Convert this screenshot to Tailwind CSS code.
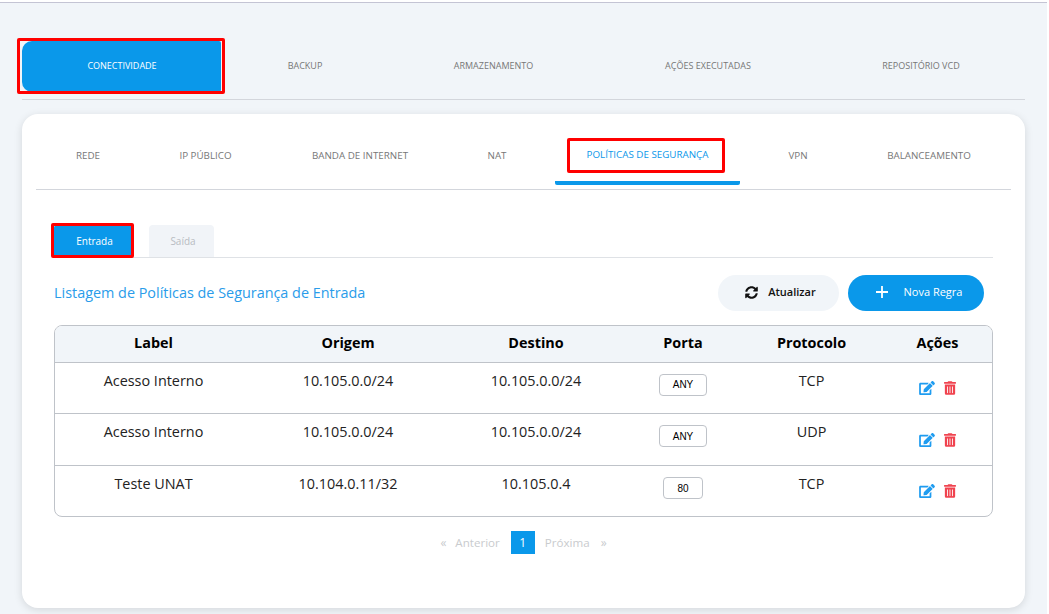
<!DOCTYPE html>
<html lang="pt">
<head>
<meta charset="utf-8">
<script src="https://cdn.jsdelivr.net/npm/@tailwindcss/browser@4"></script>
</head>
<body class="h-[614px] overflow-hidden bg-white font-['Open_Sans',sans-serif]">
<div class="relative h-[614px] w-[1047px] border-t-[1px] border-[#c4c4d4] mt-[2px] bg-[#f1f5f9] pl-[22px] pt-[38px]">
  <nav class="flex h-[59px] w-[1003px] border-b border-[#d3d6dc] pb-[7px] text-[9px] text-[#777]">
    <a class="flex h-[51px] w-[199px] items-center justify-center rounded-l-[10px] rounded-r-[2px] bg-[#0a98ea] pb-[2px] pl-[1px] text-white">CONECTIVIDADE</a>
    <a class="flex h-[51px] w-[168px] items-center justify-center pb-[2px]">BACKUP</a>
    <a class="flex h-[51px] w-[208px] items-center justify-center pb-[2px] pl-[1px]">ARMAZENAMENTO</a>
    <a class="flex h-[51px] w-[222px] items-center justify-center pb-[2px]">AÇÕES EXECUTADAS</a>
    <a class="flex h-[51px] w-[202px] items-center justify-center pb-[2px] pl-[2px]">REPOSITÓRIO VCD</a>
  </nav>
  <main class="mt-[14px] h-[494px] w-[1003px] rounded-[16px] bg-white px-[14px] shadow-[0_2px_8px_rgba(0,0,0,0.12)]">
    <nav class="flex h-[76px] w-[975px] border-b border-[#d3d6dc] text-[9.8px] text-[#777]">
      <a class="flex h-[67px] w-[104px] items-center justify-center pt-[18px]">REDE</a>
      <a class="flex h-[67px] w-[130px] items-center justify-center pl-[1px] pt-[18px]">IP PÚBLICO</a>
      <a class="flex h-[67px] w-[180px] items-center justify-center pt-[18px]">BANDA DE INTERNET</a>
      <a class="flex h-[67px] w-[94px] items-center justify-center pt-[18px]">NAT</a>
      <a class="ml-[11px] flex h-[71px] w-[185px] items-center justify-center rounded-b-[2px] border-b-[4px] border-[#0a98ea] pt-[16px] text-[#0a98ea]">POLÍTICAS DE SEGURANÇA</a>
      <a class="flex h-[67px] w-[116px] items-center justify-center pt-[18px]">VPN</a>
      <a class="flex h-[67px] w-[146px] items-center justify-center pt-[18px]">BALANCEAMENTO</a>
    </nav>
    <section class="pl-[18px] pt-[35px]">
      <div class="flex h-[33px] w-[939px] gap-[16px] border-b border-[#dfe2e6] text-[10px]">
        <button class="h-[32px] w-[79px] rounded-t-[3px] bg-[#0a98ea] pl-[2px] text-white">Entrada</button>
        <button class="h-[32px] w-[65px] rounded-t-[4px] bg-[#f1f4f8] pl-[3px] text-[#b8bcc2]">Saída</button>
      </div>
      <div class="mt-[17px] flex h-[36px] w-[930px] items-center justify-between">
        <h2 class="text-[14.4px] font-normal text-[#2a9cea]">Listagem de Políticas de Segurança de Entrada</h2>
        <div class="flex gap-[9px] text-[11px]">
          <button class="flex h-[36px] w-[121px] items-center justify-center gap-[10px] rounded-full bg-[#f1f5f9] pb-[2px] pl-[4px] font-semibold text-[#111]">
            <svg class="h-[13px] w-[13px]" viewBox="0 0 512 512" fill="#111"><path d="M370.72 133.28C339.458 104.008 298.888 87.962 255.848 88c-77.458.068-144.328 53.178-162.791 126.85-1.344 5.363-6.122 9.15-11.651 9.15H24.103c-7.498 0-13.194-6.807-11.807-14.176C33.933 94.924 134.813 8 256 8c66.448 0 126.791 26.136 171.315 68.685L463.03 40.97C478.149 25.851 504 36.559 504 57.941V192c0 13.255-10.745 24-24 24H345.941c-21.382 0-32.09-25.851-16.971-40.971l41.75-41.749zM32 296h134.059c21.382 0 32.09 25.851 16.971 40.971l-41.75 41.75c31.262 29.273 71.835 45.319 114.876 45.28 77.418-.07 144.315-53.144 162.787-126.849 1.344-5.363 6.122-9.15 11.651-9.15h57.304c7.498 0 13.194 6.807 11.807 14.176C478.067 417.076 377.187 504 256 504c-66.448 0-126.791-26.136-171.315-68.685L48.97 471.03C33.851 486.149 8 475.441 8 454.059V320c0-13.255 10.745-24 24-24z"/></svg>
            Atualizar
          </button>
          <button class="flex h-[36px] w-[136px] items-center justify-center gap-[16px] rounded-full bg-[#0a98ea] pb-[2px] pl-[6px] text-white">
            <svg class="h-[12px] w-[12px]" viewBox="0 0 12 12" fill="none" stroke="#fff" stroke-width="1.8"><path d="M6 0v12M0 6h12"/></svg>
            Nova Regra
          </button>
        </div>
      </div>
      <div class="mt-[14px] h-[192px] w-[939px] overflow-hidden rounded-[8px] border border-[#bfc3c9]">
        <table class="w-full table-fixed border-collapse text-center text-[14.4px] text-[#222]">
          <colgroup><col class="w-[197px]"><col class="w-[192px]"><col class="w-[184px]"><col class="w-[110px]"><col class="w-[147px]"><col></colgroup>
          <thead class="bg-[#f1f5f9] text-black">
            <tr class="h-[36px] border-b border-[#bfc3c9] font-bold">
              <th class="pb-[1px]">Label</th><th class="pb-[1px]">Origem</th><th class="pb-[1px]">Destino</th><th class="pb-[1px]">Porta</th><th class="pb-[1px]">Protocolo</th><th class="pb-[1px] pr-[2px]">Ações</th>
            </tr>
          </thead>
          <tbody>
            <tr class="h-[51px] border-b border-[#bfc3c9]">
              <td class="pb-[14px]">Acesso Interno</td><td class="pb-[14px]">10.105.0.0/24</td><td class="pb-[14px]">10.105.0.0/24</td>
              <td class="pb-[7px]"><span class="inline-flex h-[22px] w-[48px] items-center justify-center rounded-[4px] border border-[#bfc3c9] font-['Liberation_Sans',sans-serif] text-[10px] text-black">ANY</span></td>
              <td class="pb-[14px]">TCP</td>
              <td><div class="flex items-center justify-center gap-[9px] pr-[3px]">
                <svg class="h-[14px] w-[16px]" viewBox="0 0 576 512" fill="#1f9cf0"><path d="M402.6 83.2l90.2 90.2c3.8 3.8 3.8 10 0 13.8L274.4 405.6l-92.8 10.3c-12.4 1.4-22.9-9.1-21.5-21.5l10.3-92.8L388.8 83.2c3.8-3.8 10-3.8 13.8 0zm162-22.9l-48.8-48.8c-15.2-15.2-39.9-15.2-55.2 0l-35.4 35.4c-3.8 3.8-3.8 10 0 13.8l90.2 90.2c3.8 3.8 10 3.8 13.8 0l35.4-35.4c15.2-15.3 15.2-40 0-55.2zM384 346.2V448H64V128h229.8c3.2 0 6.2-1.3 8.5-3.5l40-40c7.6-7.6 2.2-20.5-8.5-20.5H48C21.5 64 0 85.5 0 112v352c0 26.5 21.5 48 48 48h352c26.5 0 48-21.5 48-48V306.2c0-10.7-12.9-16-20.5-8.5l-40 40c-2.2 2.3-3.5 5.3-3.5 8.5z"/></svg>
                <svg class="h-[14px] w-[12px]" viewBox="0 0 448 512" fill="#f0434f"><path d="M32 464a48 48 0 0 0 48 48h288a48 48 0 0 0 48-48V128H32zm272-256a16 16 0 0 1 32 0v224a16 16 0 0 1-32 0zm-96 0a16 16 0 0 1 32 0v224a16 16 0 0 1-32 0zm-96 0a16 16 0 0 1 32 0v224a16 16 0 0 1-32 0zM432 32H312l-9.4-18.7A24 24 0 0 0 281.1 0H166.8a23.72 23.72 0 0 0-21.4 13.3L136 32H16A16 16 0 0 0 0 48v32a16 16 0 0 0 16 16h416a16 16 0 0 0 16-16V48a16 16 0 0 0-16-16z"/></svg>
              </div></td>
            </tr>
            <tr class="h-[52px] border-b border-[#bfc3c9]">
              <td class="pb-[15px]">Acesso Interno</td><td class="pb-[15px]">10.105.0.0/24</td><td class="pb-[15px]">10.105.0.0/24</td>
              <td class="pb-[7px]"><span class="inline-flex h-[22px] w-[48px] items-center justify-center rounded-[4px] border border-[#bfc3c9] font-['Liberation_Sans',sans-serif] text-[10px] text-black">ANY</span></td>
              <td class="pb-[15px]">UDP</td>
              <td class="pt-[1px]"><div class="flex items-center justify-center gap-[9px] pr-[3px]">
                <svg class="h-[14px] w-[16px]" viewBox="0 0 576 512" fill="#1f9cf0"><path d="M402.6 83.2l90.2 90.2c3.8 3.8 3.8 10 0 13.8L274.4 405.6l-92.8 10.3c-12.4 1.4-22.9-9.1-21.5-21.5l10.3-92.8L388.8 83.2c3.8-3.8 10-3.8 13.8 0zm162-22.9l-48.8-48.8c-15.2-15.2-39.9-15.2-55.2 0l-35.4 35.4c-3.8 3.8-3.8 10 0 13.8l90.2 90.2c3.8 3.8 10 3.8 13.8 0l35.4-35.4c15.2-15.3 15.2-40 0-55.2zM384 346.2V448H64V128h229.8c3.2 0 6.2-1.3 8.5-3.5l40-40c7.6-7.6 2.2-20.5-8.5-20.5H48C21.5 64 0 85.5 0 112v352c0 26.5 21.5 48 48 48h352c26.5 0 48-21.5 48-48V306.2c0-10.7-12.9-16-20.5-8.5l-40 40c-2.2 2.3-3.5 5.3-3.5 8.5z"/></svg>
                <svg class="h-[14px] w-[12px]" viewBox="0 0 448 512" fill="#f0434f"><path d="M32 464a48 48 0 0 0 48 48h288a48 48 0 0 0 48-48V128H32zm272-256a16 16 0 0 1 32 0v224a16 16 0 0 1-32 0zm-96 0a16 16 0 0 1 32 0v224a16 16 0 0 1-32 0zm-96 0a16 16 0 0 1 32 0v224a16 16 0 0 1-32 0zM432 32H312l-9.4-18.7A24 24 0 0 0 281.1 0H166.8a23.72 23.72 0 0 0-21.4 13.3L136 32H16A16 16 0 0 0 0 48v32a16 16 0 0 0 16 16h416a16 16 0 0 0 16-16V48a16 16 0 0 0-16-16z"/></svg>
              </div></td>
            </tr>
            <tr class="h-[51px]">
              <td class="pb-[14px]">Teste UNAT</td><td class="pb-[14px]">10.104.0.11/32</td><td class="pb-[14px]">10.105.0.4</td>
              <td class="pb-[7px]"><span class="inline-flex h-[22px] w-[40px] items-center justify-center rounded-[4px] border border-[#bfc3c9] font-['Liberation_Sans',sans-serif] text-[10px] text-black">80</span></td>
              <td class="pb-[14px]">TCP</td>
              <td><div class="flex items-center justify-center gap-[9px] pr-[3px]">
                <svg class="h-[14px] w-[16px]" viewBox="0 0 576 512" fill="#1f9cf0"><path d="M402.6 83.2l90.2 90.2c3.8 3.8 3.8 10 0 13.8L274.4 405.6l-92.8 10.3c-12.4 1.4-22.9-9.1-21.5-21.5l10.3-92.8L388.8 83.2c3.8-3.8 10-3.8 13.8 0zm162-22.9l-48.8-48.8c-15.2-15.2-39.9-15.2-55.2 0l-35.4 35.4c-3.8 3.8-3.8 10 0 13.8l90.2 90.2c3.8 3.8 10 3.8 13.8 0l35.4-35.4c15.2-15.3 15.2-40 0-55.2zM384 346.2V448H64V128h229.8c3.2 0 6.2-1.3 8.5-3.5l40-40c7.6-7.6 2.2-20.5-8.5-20.5H48C21.5 64 0 85.5 0 112v352c0 26.5 21.5 48 48 48h352c26.5 0 48-21.5 48-48V306.2c0-10.7-12.9-16-20.5-8.5l-40 40c-2.2 2.3-3.5 5.3-3.5 8.5z"/></svg>
                <svg class="h-[14px] w-[12px]" viewBox="0 0 448 512" fill="#f0434f"><path d="M32 464a48 48 0 0 0 48 48h288a48 48 0 0 0 48-48V128H32zm272-256a16 16 0 0 1 32 0v224a16 16 0 0 1-32 0zm-96 0a16 16 0 0 1 32 0v224a16 16 0 0 1-32 0zm-96 0a16 16 0 0 1 32 0v224a16 16 0 0 1-32 0zM432 32H312l-9.4-18.7A24 24 0 0 0 281.1 0H166.8a23.72 23.72 0 0 0-21.4 13.3L136 32H16A16 16 0 0 0 0 48v32a16 16 0 0 0 16 16h416a16 16 0 0 0 16-16V48a16 16 0 0 0-16-16z"/></svg>
              </div></td>
            </tr>
          </tbody>
        </table>
      </div>
      <div class="mt-[14px] flex h-[23px] w-[939px] items-center justify-center text-[12px] text-[#c9cbce]">
        <span>«</span><span class="ml-[9px] text-[11.6px]">Anterior</span>
        <span class="ml-[11px] flex h-[23px] w-[24px] items-center justify-center bg-[#0a98ea] text-white">1</span>
        <span class="ml-[10px] text-[11.6px]">Próxima</span><span class="ml-[11px]">»</span>
      </div>
    </section>
  </main>
  <div class="absolute left-[17px] top-[35px] h-[56px] w-[208px] rounded-[2px] border-[3px] border-[#ff0000]"></div>
  <div class="absolute left-[567px] top-[135px] h-[35px] w-[158px] rounded-[2px] border-[3px] border-[#ff0000]"></div>
  <div class="absolute left-[51px] top-[220px] h-[35px] w-[83px] rounded-[2px] border-[3px] border-[#ff0000]"></div>
</div>
</body>
</html>
